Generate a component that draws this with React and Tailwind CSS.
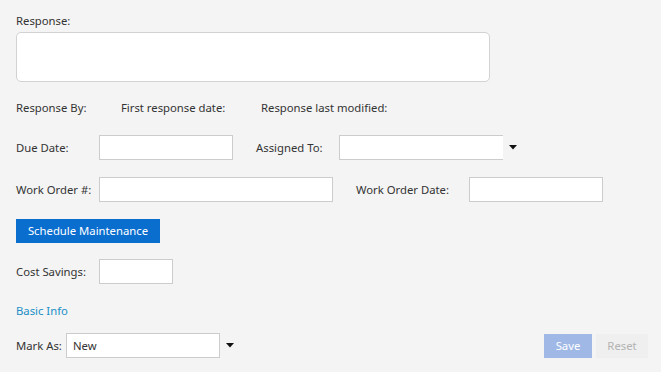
import React from 'react';

const Caret = () => (
    <svg width="8" height="5" viewBox="0 0 8 5" className="ml-[6px]">
        <path d="M0 0 L8 0 L4 4.5 Z" fill="#111" />
    </svg>
);

const Field = ({ className }) => (
    <div className={`h-[25px] bg-white border border-[#cccccc] ${className}`} />
);

const App = () => {
    return (
        <div
            className="w-[661px] h-[372px] bg-[#f4f4f4] px-4 text-[11.3px] leading-[16px] text-[#333] overflow-hidden"
            style={{ fontFamily: '"Noto Sans", "Open Sans", sans-serif' }}
        >
            <div className="pt-[13px]">Response:</div>
            <div className="mt-[3px] w-[474px] h-[50px] bg-white border border-[#d2d2d2] rounded-[5px]" />

            <div className="mt-[18px] flex">
                <span className="w-[105px]">Response By:</span>
                <span className="w-[140px]">First response date:</span>
                <span>Response last modified:</span>
            </div>

            <div className="mt-[19px] flex items-center">
                <span className="w-[83px]">Due Date:</span>
                <Field className="w-[134px]" />
                <span className="w-[83px] ml-[23px]">Assigned To:</span>
                <Field className="w-[164px] border-r-0" />
                <Caret />
            </div>

            <div className="mt-[17px] flex items-center">
                <span className="w-[83px]">Work Order #:</span>
                <Field className="w-[234px]" />
                <span className="w-[113px] ml-[23px]">Work Order Date:</span>
                <Field className="w-[134px]" />
            </div>

            <button className="mt-[17px] h-[24px] w-[144px] bg-[#0a6ecf] text-white flex items-center justify-center">
                Schedule Maintenance
            </button>

            <div className="mt-[16px] flex items-center">
                <span className="w-[83px]">Cost Savings:</span>
                <Field className="w-[74px]" />
            </div>

            <div className="mt-[19px] text-[#1a8fc7]">Basic Info</div>

            <div className="mt-[14px] flex items-center">
                <span className="w-[50px]">Mark As:</span>
                <div className="h-[25px] w-[154px] bg-white border border-[#cccccc] flex items-center px-[6px]">New</div>
                <Caret />
                <div className="ml-auto flex gap-[4px] mr-[-3px]">
                    <button className="h-[24px] w-[48px] bg-[#9fb8e6] text-white">Save</button>
                    <button className="h-[24px] w-[52px] bg-[#efefef] text-[#b3b3b3]">Reset</button>
                </div>
            </div>
        </div>
    );
};

export default App;
